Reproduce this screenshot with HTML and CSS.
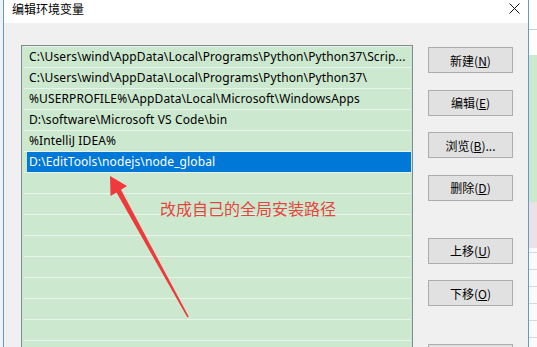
FILE: index.html
```html
<!DOCTYPE html>
<html lang="zh-CN">
<head>
    <meta charset="UTF-8">
    <title>编辑环境变量</title>
    <link rel="stylesheet" href="styles.css">
</head>
<body>
    <div class="desktop">
        <div class="back-left"></div>

        <div class="dialog">
            <div class="titlebar">
                <span class="title">编辑环境变量</span>
                <svg class="close" width="11" height="11" viewBox="0 0 11 11">
                    <path d="M0.5 0.5 L10.5 10.5 M10.5 0.5 L0.5 10.5" stroke="#111" stroke-width="1" fill="none"/>
                </svg>
            </div>

            <div class="content">
                <div class="list">
                    <div class="row"><span class="text">C:\Users\wind\AppData\Local\Programs\Python\Python37\Scrip...</span></div>
                    <div class="row"><span class="text">C:\Users\wind\AppData\Local\Programs\Python\Python37\</span></div>
                    <div class="row"><span class="text">%USERPROFILE%\AppData\Local\Microsoft\WindowsApps</span></div>
                    <div class="row"><span class="text">D:\software\Microsoft VS Code\bin</span></div>
                    <div class="row"><span class="text">%IntelliJ IDEA%</span></div>
                    <div class="row selected"><span class="text">D:\EditTools\nodejs\node_global</span></div>
                    <div class="row"></div>
                    <div class="row"></div>
                    <div class="row"></div>
                    <div class="row"></div>
                    <div class="row"></div>
                    <div class="row"></div>
                    <div class="row"></div>
                    <div class="row"></div>
                    <div class="row"></div>
                </div>

                <div class="buttons">
                    <button>新建(<u>N</u>)</button>
                    <button>编辑(<u>E</u>)</button>
                    <button>浏览(<u>B</u>)...</button>
                    <button>删除(<u>D</u>)</button>
                    <button class="spaced">上移(<u>U</u>)</button>
                    <button>下移(<u>O</u>)</button>
                    <button class="spaced"></button>
                </div>
            </div>
        </div>

        <div class="back-right">
            <div class="br-top"></div>
            <div class="br-white"></div>
            <div class="br-green"></div>
            <div class="br-grid"></div>
        </div>

        <!-- 标注 -->
        <div class="note">改成自己的全局安装路径</div>
        <svg class="arrow" width="537" height="347" viewBox="0 0 537 347">
            <polygon points="110,176 110.5,196 116.5,192.4 187.4,317.6 188.8,316.8 121,189.8 127,186" fill="#f0393a"/>
        </svg>
    </div>
</body>
</html>
```

FILE: styles.css
```css
* {
    box-sizing: border-box;
}

body {
    margin: 0;
    font-family: "Noto Sans", "Noto Sans CJK SC", sans-serif;
    font-size: 12px;
    color: #000;
    background: #eef3f9;
}

.desktop {
    position: relative;
    display: flex;
    width: 537px;
    height: 347px;
    overflow: hidden;
}

.back-left {
    flex: none;
    width: 3px;
    background: #eef3f9;
}

.dialog {
    flex: none;
    width: 526px;
    display: flex;
    flex-direction: column;
    background: #f0f0f0;
    border-left: 1px solid #5f9ad3;
    border-right: 1px solid #5f9ad3;
}

.titlebar {
    flex: none;
    height: 23px;
    display: flex;
    justify-content: space-between;
    align-items: flex-start;
    padding: 0 8px 0 8px;
    background: #fff;
}

.title {
    font-family: "Noto Sans CJK SC", sans-serif;
    line-height: 18px;
}

.close {
    margin-top: 3px;
}

.content {
    display: flex;
    gap: 15px;
    padding: 22px 14px 0 17px;
}

.list {
    flex: none;
    width: 392px;
    height: 340px;
    border: 1px solid #828790;
    background: #cce8cf;
    overflow: hidden;
}

.row {
    height: 21px;
    margin: 0 1px 0 2px;
    border-top: 1px solid #e9f5ea;
    white-space: nowrap;
    overflow: hidden;
}

.row .text {
    display: block;
    height: 20px;
    line-height: 20px;
    margin-left: 3px;
    padding-left: 2px;
    letter-spacing: 0.11px;
}

.row.selected .text {
    background: #0078d7;
    color: #fff;
}

.buttons {
    flex: none;
    width: 85px;
    display: flex;
    flex-direction: column;
    gap: 16.6px;
    padding-top: 2px;
}

.buttons button {
    height: 26px;
    padding: 0;
    font-family: "Noto Sans CJK SC", sans-serif;
    font-size: 12px;
    color: #000;
    background: #e1e1e1;
    border: 1px solid #adadad;
}

.buttons .spaced {
    margin-top: 20.5px;
}

.back-right {
    flex: none;
    width: 8px;
    display: flex;
    flex-direction: column;
    background: #fff;
}

.br-top {
    height: 30px;
    border-bottom: 1px solid #c9ced6;
}

.br-white {
    height: 25px;
}

.br-green {
    height: 147px;
    background: #cce8cf;
}

.br-grid {
    flex: 1;
    background:
        linear-gradient(#ebe3e3, #ebe3e3) 0 0 / 100% 46px no-repeat,
        repeating-linear-gradient(#fafafa 0 16px, #d9d9d9 16px 17px);
}

/* 标注 */
.note {
    position: absolute;
    left: 160px;
    top: 200px;
    font-family: "Noto Sans CJK SC", sans-serif;
    font-size: 16px;
    line-height: 17px;
    color: #e4463e;
}

.arrow {
    position: absolute;
    left: 0;
    top: 0;
}
```
